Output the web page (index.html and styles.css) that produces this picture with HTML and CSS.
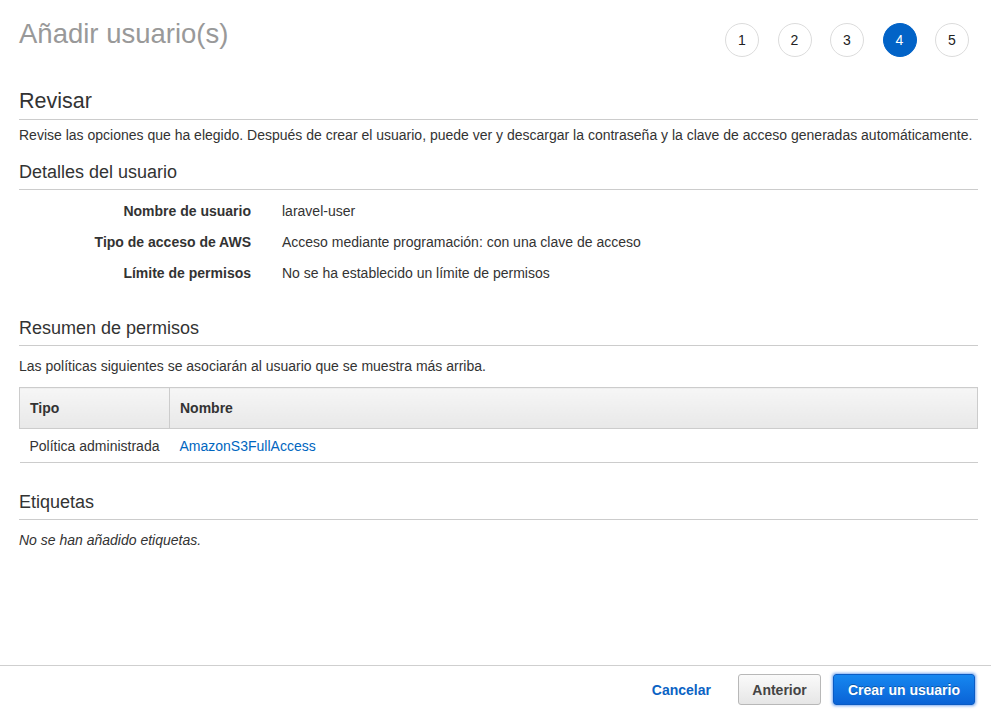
FILE: index.html
```html
<!DOCTYPE html>
<html lang="es">
<head>
<meta charset="utf-8">
<link rel="stylesheet" href="styles.css">
</head>
<body>
<div class="page">
  <header class="top">
    <h1 class="title">Añadir usuario(s)</h1>
    <ol class="steps">
      <li class="step">1</li>
      <li class="step">2</li>
      <li class="step">3</li>
      <li class="step active">4</li>
      <li class="step">5</li>
    </ol>
  </header>

  <section class="section first">
    <h2 class="h-main">Revisar</h2>
    <p class="desc">Revise las opciones que ha elegido. Después de crear el usuario, puede ver y descargar la contraseña y la clave de acceso generadas automáticamente.</p>
  </section>

  <section class="section">
    <h3 class="h-sub">Detalles del usuario</h3>
    <dl class="details">
      <dt>Nombre de usuario</dt><dd>laravel-user</dd>
      <dt>Tipo de acceso de AWS</dt><dd>Acceso mediante programación: con una clave de acceso</dd>
      <dt>Límite de permisos</dt><dd>No se ha establecido un límite de permisos</dd>
    </dl>
  </section>

  <section class="section perms">
    <h3 class="h-sub">Resumen de permisos</h3>
    <p class="desc spaced">Las políticas siguientes se asociarán al usuario que se muestra más arriba.</p>
    <table class="tbl">
      <thead>
        <tr><th class="c1">Tipo</th><th>Nombre</th></tr>
      </thead>
      <tbody>
        <tr><td class="c1">Política administrada</td><td><a class="link" href="#">AmazonS3FullAccess</a></td></tr>
      </tbody>
    </table>
  </section>

  <section class="section tags">
    <h3 class="h-sub">Etiquetas</h3>
    <p class="desc spaced italic">No se han añadido etiquetas.</p>
  </section>
</div>

<footer class="footer">
  <a class="btn-link" href="#">Cancelar</a>
  <button class="btn btn-default">Anterior</button>
  <button class="btn btn-primary">Crear un usuario</button>
</footer>
</body>
</html>
```

FILE: styles.css
```css
* { box-sizing: border-box; }
html, body { margin: 0; padding: 0; }
body {
  font-family: "Liberation Sans", Arial, Helvetica, sans-serif;
  color: #333;
  background: #fff;
  width: 991px;
  height: 713px;
  display: flex;
  flex-direction: column;
  overflow: hidden;
}
.page {
  flex: 1;
  padding: 0 13px 0 19px;
}
.top {
  display: flex;
  justify-content: space-between;
  align-items: flex-start;
  height: 84px;
}
.title {
  margin: 18px 0 0;
  font-size: 27.5px;
  font-weight: normal;
  color: #999;
  line-height: 32px;
}
.steps {
  list-style: none;
  margin: 23px 9px 0 0;
  padding: 0;
  display: flex;
  gap: 18.5px;
}
.step {
  width: 34px;
  height: 34px;
  border-radius: 50%;
  border: 1px solid #dcdcdc;
  display: flex;
  align-items: center;
  justify-content: center;
  font-size: 14px;
  color: #222;
}
.step.active {
  background: #0263c7;
  border-color: #0263c7;
  color: #fff;
}
.section { margin: 0; }
.h-main {
  margin: 0;
  font-size: 21.5px;
  font-weight: normal;
  color: #333;
  line-height: 34px;
  padding-bottom: 1px;
  border-bottom: 1px solid #ccc;
}
.h-sub {
  margin: 0;
  font-size: 18px;
  font-weight: normal;
  color: #333;
  line-height: 26px;
  padding-bottom: 4px;
  border-bottom: 1px solid #ccc;
}
.desc {
  margin: 6px 0 0;
  font-size: 14px;
  line-height: 18px;
  color: #333;
}
.desc.spaced { margin-top: 11px; }
.italic { font-style: italic; }
.first { margin-bottom: 15px; }
.details {
  display: grid;
  grid-template-columns: 232px 1fr;
  column-gap: 31px;
  row-gap: 13px;
  margin: 12px 0 0;
  font-size: 14px;
  line-height: 18px;
}
.details dt {
  font-weight: bold;
  text-align: right;
  color: #333;
}
.details dd { margin: 0; color: #333; }
.perms { margin-top: 33px; }
.tbl {
  width: 100%;
  margin-top: 12px;
  border-collapse: collapse;
  font-size: 14px;
}
.tbl th {
  text-align: left;
  font-weight: bold;
  color: #333;
  height: 41px;
  padding: 0 10px;
  background: linear-gradient(#f6f6f6, #e8e8e8);
  border: 1px solid #cccccc;
}
.tbl td {
  height: 34px;
  padding: 0 10px;
  border-bottom: 1px solid #ccc;
  color: #333;
}
.tbl .c1 { width: 150px; }
.link { color: #0066c0; text-decoration: none; }
.tags { margin-top: 26px; }
.footer {
  height: 48px;
  border-top: 1px solid #cfcfcf;
  display: flex;
  align-items: center;
  justify-content: flex-end;
  padding: 0 16px 0 0;
}
.btn-link {
  color: #0b63c4;
  font-weight: bold;
  font-size: 14px;
  text-decoration: none;
  margin-right: 27px;
}
.btn {
  font-family: inherit;
  font-weight: bold;
  font-size: 14px;
  height: 31px;
  border-radius: 3px;
  cursor: pointer;
}
.btn-default {
  width: 83px;
  color: #444;
  background: linear-gradient(#fafafa, #e6e6e6);
  border: 1px solid #b8b8b8;
  margin-right: 12px;
}
.btn-primary {
  width: 142px;
  color: #fff;
  background: linear-gradient(#1687f0, #0a63d6);
  border: 1px solid #0a5bc4;
  box-shadow: 0 0 3px 1px rgba(30, 110, 230, 0.6);
  text-shadow: 0 -1px 0 rgba(0,0,0,0.3);
}
```
